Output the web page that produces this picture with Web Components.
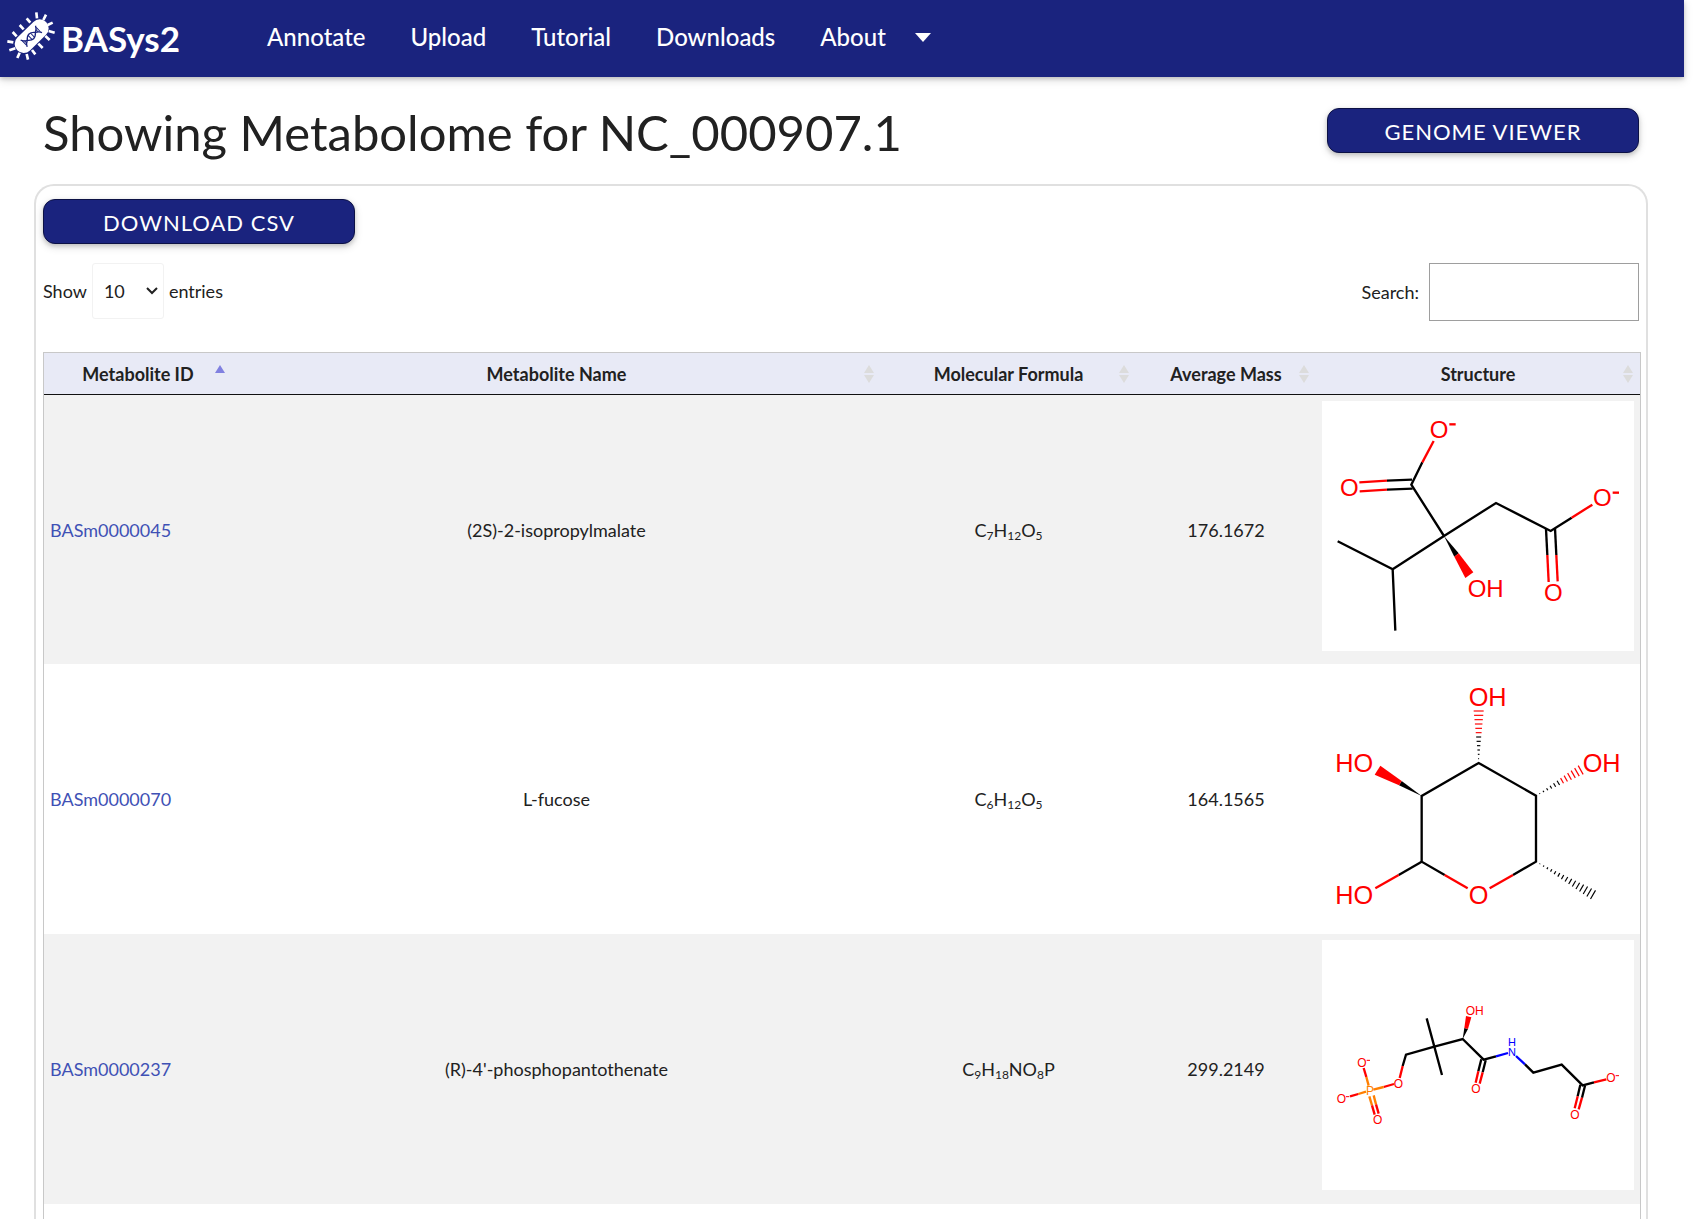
<!DOCTYPE html>
<html lang="en">
<head>
<meta charset="utf-8">
<title>BASys2 - Metabolome</title>
<style>
  html { background: #fff; }
  body {
    margin: 0;
    padding-right: 14px;
    min-height: 100vh;
    box-sizing: border-box;
    display: flex;
    flex-direction: column;
    font-family: Lato, "Open Sans", sans-serif;
    font-size: 18px;
    line-height: 22px;
    color: #212121;
  }
</style>
</head>
<body>
<bs-header>
  <bs-nav-link>Annotate</bs-nav-link>
  <bs-nav-link>Upload</bs-nav-link>
  <bs-nav-link>Tutorial</bs-nav-link>
  <bs-nav-link>Downloads</bs-nav-link>
  <bs-nav-link menu>About</bs-nav-link>
</bs-header>
<bs-page>
  <bs-title-bar slot="title">
    Showing Metabolome for NC_000907.1
    <bs-button slot="action">Genome Viewer</bs-button>
  </bs-title-bar>
  <bs-button>Download CSV</bs-button>
  <bs-table-controls></bs-table-controls>
  <bs-metabolite-table></bs-metabolite-table>
</bs-page>

<script>
const define = (name, html, setup) => {
  const template = document.createElement('template');
  template.innerHTML = html;
  customElements.define(name, class extends HTMLElement {
    constructor() {
      super();
      this.attachShadow({ mode: 'open' }).append(template.content.cloneNode(true));
    }
    connectedCallback() { if (setup) setup(this, this.shadowRoot); }
  });
};

define('bs-logo', `
<style>
  :host { display: block; }
  a { display: flex; align-items: center; gap: 5px; color: #fff; text-decoration: none; font-size: 35px; font-weight: 700; line-height: 44px; }
  svg { width: 50px; height: 50px; display: block; }
  span { padding-top: 3px; }
</style>
<a href="#">
  <svg viewBox="18 33 150 150" fill="none" stroke="#fff" aria-hidden="true">
    <path d="M71 132L119 85" stroke-width="54" stroke-linecap="round"/>
    <path stroke-width="8" d="M22 124L40 127M28 151L46 145M52 174L59 158M84 179L80 162M106 163L96 150M128 144L115 131M149 120L136 108M164 98L146 93M158 68L143 75M138 44L130 60M109 37L111 55M80 55L91 68M59 75L71 88M38 96L50 109"/>
    <g stroke="#1a237e" stroke-width="4" transform="translate(94 109) rotate(-44)">
      <path d="M-31 -14Q-27 -5 -17 0Q0 20 17 0Q27 -5 31 -14"/>
      <path d="M-31 14Q-27 5 -17 0Q0 -20 17 0Q27 5 31 14"/>
      <path stroke-width="3" d="M-29 -9V9M-24 -5V5M-5 -9V9M5 -9V9M24 -5V5M29 -9V9"/>
    </g>
  </svg>
  <span>BASys2</span>
</a>`);

define('bs-header', `
<style>
  :host { display: block; position: relative; background: #1a237e; box-shadow: 0 2px 4px rgba(0,0,0,.16), 0 3px 9px rgba(0,0,0,.14); }
  header { display: flex; height: 77px; padding: 0 6px; gap: 65px; box-sizing: border-box; }
  bs-logo { padding-top: 11px; }
  nav { display: flex; height: 74px; align-items: center; gap: 1px; }
</style>
<header><bs-logo></bs-logo><nav><slot></slot></nav></header>`);

define('bs-nav-link', `
<style>
  :host { display: block; }
  a { display: flex; align-items: center; gap: 29px; padding: 0 22px; color: #fff; font-size: 24px; line-height: 32px; text-decoration: none; font-weight: 500; }
  i { display: none; border: 8px solid transparent; border-top: 9px solid #fff; border-bottom: 0; }
  :host([menu]) i { display: block; }
</style>
<a href="#"><slot></slot><i></i></a>`);

define('bs-button', `
<style>
  :host { display: block; width: 312px; }
  button {
    display: block; width: 100%; height: 45px; padding: 2px 0 0; box-sizing: border-box;
    border: 1px solid #0c1145; border-radius: 12px; background: #1a237e; color: #fff;
    font: 400 22px/32px Lato, sans-serif; text-transform: uppercase; letter-spacing: 1px;
    box-shadow: 0 2px 4px rgba(0,0,0,.16), 0 3px 9px rgba(0,0,0,.14);
  }
</style>
<button type="button"><slot></slot></button>`);

define('bs-title-bar', `
<style>
  :host { display: flex; justify-content: space-between; align-items: center; height: 107px; padding: 0 9px; }
  h1 { margin: 0; padding-top: 2px; font-size: 49px; line-height: 60px; font-weight: 400; }
</style>
<h1><slot></slot></h1><slot name="action"></slot>`);

define('bs-page', `
<style>
  :host { flex: 1; display: flex; flex-direction: column; padding: 0 36px 0 34px; }
  section { flex: 1; border: 2px solid #e0e0e0; border-bottom: 0; border-radius: 20px 20px 0 0; padding: 13px 5px 0 7px; }
</style>
<slot name="title"></slot>
<section><slot></slot></section>`);

define('bs-table-controls', `
<style>
  :host { display: flex; justify-content: space-between; align-items: flex-start; padding: 19px 2px 31px 0; }
  label { display: flex; align-items: center; }
  .length { gap: 5px; }
  .search { gap: 10px; }
  .pick { display: grid; align-items: center; }
  .pick > * { grid-area: 1 / 1; }
  .pick svg { width: 12px; height: 8px; justify-self: end; margin-right: 6px; pointer-events: none; }
  select { appearance: none; width: 72px; height: 56px; padding: 0 20px 0 11px; border: 1px solid #f2f2f2; border-radius: 3px; background: #fff; color: #212121; font: 400 18px Lato, sans-serif; }
  input { width: 210px; height: 58px; box-sizing: border-box; border: 1px solid #9e9e9e; background: #fff; padding: 0 8px; font: 400 18px Lato, sans-serif; }
</style>
<label class="length" for="length">Show
  <span class="pick">
    <select id="length"><option>10</option><option>25</option><option>50</option><option>100</option></select>
    <svg viewBox="0 0 12 8" aria-hidden="true"><path d="M1 1L6 6L11 1" fill="none" stroke="#212121" stroke-width="2"/></svg>
  </span>
  entries</label>
<label class="search" for="search">Search: <input id="search" type="search"></label>`);

/* Skeletal formulas, drawn on a 936 x 750 canvas. */
const line = (points, color = '#000') => `<polyline points="${points}" fill="none" stroke="${color}" stroke-width="7"/>`;
const red = points => line(points, '#f00');
const atom = (x, y, text, size, color = '#f00') => `<text x="${x}" y="${y}" font-size="${size}" fill="${color}">${text}</text>`;
const wedge = (points, color) => `<polygon points="${points}" fill="${color}"/>`;
const hashes = (x1, y1, x2, y2, count, split) => {
  const length = Math.hypot(x2 - x1, y2 - y1), nx = -(y2 - y1) / length, ny = (x2 - x1) / length;
  let out = '';
  for (let k = 1; k <= count; k++) {
    const t = k / count, x = x1 + (x2 - x1) * t, y = y1 + (y2 - y1) * t, w = 15 * t;
    out += `<path d="M${x - nx * w} ${y - ny * w}L${x + nx * w} ${y + ny * w}" stroke="${t > split ? '#f00' : '#000'}" stroke-width="3.5"/>`;
  }
  return out;
};
const MOLECULES = {
  isopropylmalate: { top: 33, art:
    line('83,454 248,538 256,722') + line('248,538 402,438 558,339 722,423 785,383') + red('785,383 847,344') +
    line('402,438 304,284 337,217') + red('337,217 371,153') +
    line('306,269 231,272') + red('231,272 148,277') + line('308,296 231,299') + red('231,299 149,304') +
    line('708,417 712,495') + red('712,495 716,576') + line('735,415 739,495') + red('739,495 743,574') +
    wedge('402,438 433,500 446,490', '#000') + wedge('433,500 446,490 490,547 466,564', '#f00') +
    atom(359, 145, 'O', 72) + red('418,103 437,103') + atom(90, 318, 'O', 72) + atom(849, 349, 'O', 72) + red('908,308 927,308') +
    atom(473, 620, 'OH', 72) + atom(702, 634, 'O', 72) },
  fucose: { top: 30, art:
    line('404,645 335,605 335,408 506,309 678,407 678,605 609,645') + red('609,645 539,685') + red('404,645 473,685') +
    line('335,605 266,645') + red('266,645 196,685') +
    wedge('335,408 267,376 275,363', '#000') + wedge('267,376 275,363 211,317 194,344', '#f00') +
    hashes(506, 309, 506, 153, 12, .55) + hashes(678, 407, 812, 330, 12, .55) + hashes(678, 605, 849, 704, 15, 2) +
    atom(476, 138, 'OH', 76) + atom(76, 336, 'HO', 76) + atom(818, 336, 'OH', 76) + atom(76, 732, 'HO', 76) + atom(476, 732, 'O', 76) },
  phosphopantothenate: { top: 30, art:
    line('350,265 373,350 396,435') + line('278,408 288,374 373,350 458,327 521,389 558,379') + red('278,408 269,444') +
    line('558,379 594,369', '#00f') + line('618,378 645,403', '#00f') + line('645,403 670,428 755,404 818,466 852,457') + red('852,457 889,448') +
    line('514,388 505,424') + red('505,424 497,458') + line('527,391 518,427') + red('518,427 509,461') +
    line('811,464 803,499') + red('803,499 794,535') + line('825,467 816,503') + red('816,503 806,538') +
    wedge('458,327 463,294 474,297', '#000') + wedge('463,294 474,297 484,262 468,258', '#f00') +
    red('252,462 221,471') + line('221,471 190,479', '#ff7f00') + line('168,485 145,492', '#ff7f00') + red('145,492 120,499') +
    red('161,414 169,441') + line('169,441 176,467', '#ff7f00') +
    line('178,499 186,526', '#ff7f00') + red('186,526 194,554') + line('191,496 198,523', '#ff7f00') + red('198,523 206,551') +
    atom(467, 255, 'OH', 36) + atom(594, 349, 'H', 33, '#00f') + atom(594, 379, 'N', 33, '#00f') + atom(484, 489, 'O', 36) +
    atom(889, 457, 'O', 36) + atom(781, 566, 'O', 36) + atom(251, 474, 'O', 36) + atom(142, 411, 'O', 36) + atom(80, 520, 'O', 36) +
    atom(189, 582, 'O', 36) + atom(168, 496, 'P', 36, '#ff7f00') +
    '<path d="M170 391h10M108 500h10M917 437h10" stroke="#f00" stroke-width="3"/>' }
};

define('bs-molecule', `
<style>
  :host { display: block; width: 312px; height: 250px; background: #fff; }
  svg { display: block; width: 100%; height: 100%; font-family: "Liberation Sans", sans-serif; }
</style>
<svg role="img"></svg>`, (host, root) => {
  const molecule = MOLECULES[host.getAttribute('name')];
  const svg = root.querySelector('svg');
  svg.setAttribute('viewBox', `36 ${molecule.top} 936 750`);
  svg.setAttribute('aria-label', host.getAttribute('name'));
  svg.innerHTML = molecule.art;
});

define('bs-sort', `
<style>
  :host { display: flex; flex-direction: column; gap: 2px; width: 10px; height: 18px; }
  i { border: 5px solid transparent; }
  .up { border-top: 0; border-bottom: 8px solid #dcdcdc; }
  .down { border-bottom: 0; border-top: 8px solid #dcdcdc; }
  :host([ascending]) .up { border-bottom-color: #8080e0; }
  :host([ascending]) .down { visibility: hidden; }
</style>
<i class="up"></i><i class="down"></i>`);

const ROWS = [
  ['BASm0000045', '(2S)-2-isopropylmalate', 'C7H12O5', '176.1672', 'isopropylmalate'],
  ['BASm0000070', 'L-fucose', 'C6H12O5', '164.1565', 'fucose'],
  ['BASm0000237', "(R)-4'-phosphopantothenate", 'C9H18NO8P', '299.2149', 'phosphopantothenate']
];

define('bs-metabolite-table', `
<style>
  :host { display: block; }
  table { width: 100%; table-layout: fixed; border-collapse: separate; border-spacing: 0; border: 1px solid #c8c8c8; border-bottom: 0; }
  .id { width: 188px; } .formula { width: 255px; } .mass { width: 180px; } .structure { width: 324px; }
  th { height: 41px; padding: 0 7px; box-sizing: border-box; background: #e8eaf6; font-weight: 700; }
  th div { display: grid; grid-template-columns: 10px 1fr 10px; align-items: center; }
  th span { grid-column: 2; text-align: center; }
  td { height: 270px; padding: 0 6px; box-sizing: border-box; text-align: center; }
  td:first-child { text-align: left; }
  td:last-child { vertical-align: top; padding-top: 6px; }
  tbody tr:first-child td { border-top: 1px solid #111; }
  tbody tr:nth-child(odd) { background: #f2f2f2; }
  tfoot td { height: 15px; }
  a { color: #3f51b5; text-decoration: none; }
  sub { font-size: 12px; line-height: 0; vertical-align: -3px; }
</style>
<table>
  <colgroup><col class="id"><col><col class="formula"><col class="mass"><col class="structure"></colgroup>
  <thead><tr>
    <th><div><span>Metabolite ID</span><bs-sort ascending></bs-sort></div></th>
    <th><div><span>Metabolite Name</span><bs-sort></bs-sort></div></th>
    <th><div><span>Molecular Formula</span><bs-sort></bs-sort></div></th>
    <th><div><span>Average Mass</span><bs-sort></bs-sort></div></th>
    <th><div><span>Structure</span><bs-sort></bs-sort></div></th>
  </tr></thead>
  <tbody></tbody>
  <tfoot><tr><td colspan="5"></td></tr></tfoot>
</table>`, (host, root) => {
  root.querySelector('tbody').innerHTML = ROWS.map(([id, name, formula, mass, drawing]) => `<tr>
    <td><a href="#${id}">${id}</a></td>
    <td>${name}</td>
    <td>${formula.replace(/\d+/g, '<sub>$&</sub>')}</td>
    <td>${mass}</td>
    <td><bs-molecule name="${drawing}"></bs-molecule></td>
  </tr>`).join('');
});
</script>
</body>
</html>
